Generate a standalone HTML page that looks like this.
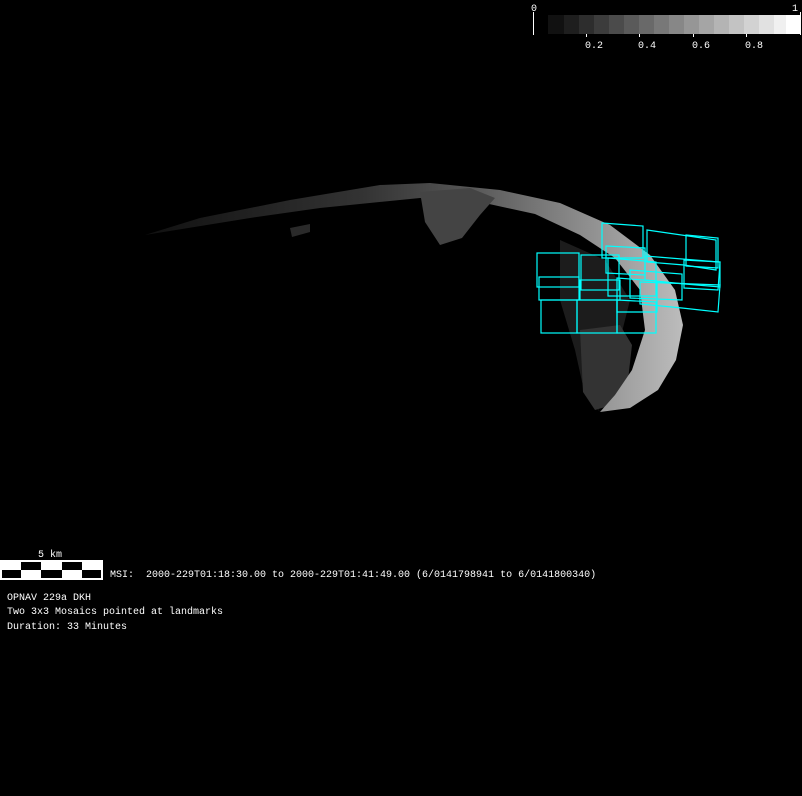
<!DOCTYPE html>
<html><head><style>
html,body{margin:0;padding:0;background:#000;width:802px;height:796px;overflow:hidden}
svg{position:absolute;left:0;top:0}
text{font-family:"Liberation Mono",monospace;font-size:10px;fill:#fff}
</style></head><body>
<svg width="802" height="796" viewBox="0 0 802 796">
<defs>
<linearGradient id="lg" x1="150" y1="0" x2="680" y2="0" gradientUnits="userSpaceOnUse">
<stop offset="0" stop-color="#111"/><stop offset="0.4" stop-color="#333"/><stop offset="0.6" stop-color="#555"/><stop offset="0.8" stop-color="#888"/><stop offset="1" stop-color="#bbb"/>
</linearGradient>
</defs>
<g>
<rect x="548" y="15" width="16" height="19" fill="#111"/>
<rect x="564" y="15" width="15" height="19" fill="#1e1e1e"/>
<rect x="579" y="15" width="15" height="19" fill="#2d2d2d"/>
<rect x="594" y="15" width="15" height="19" fill="#3c3c3c"/>
<rect x="609" y="15" width="15" height="19" fill="#4b4b4b"/>
<rect x="624" y="15" width="15" height="19" fill="#5a5a5a"/>
<rect x="639" y="15" width="15" height="19" fill="#696969"/>
<rect x="654" y="15" width="15" height="19" fill="#787878"/>
<rect x="669" y="15" width="15" height="19" fill="#878787"/>
<rect x="684" y="15" width="15" height="19" fill="#969696"/>
<rect x="699" y="15" width="15" height="19" fill="#a5a5a5"/>
<rect x="714" y="15" width="15" height="19" fill="#b4b4b4"/>
<rect x="729" y="15" width="15" height="19" fill="#c3c3c3"/>
<rect x="744" y="15" width="15" height="19" fill="#d2d2d2"/>
<rect x="759" y="15" width="15" height="19" fill="#e1e1e1"/>
<rect x="774" y="15" width="12" height="19" fill="#f0f0f0"/>
<rect x="786" y="15" width="14" height="19" fill="#fff"/>
<line x1="533.5" y1="12" x2="533.5" y2="35" stroke="#fff"/>
<line x1="800.5" y1="12" x2="800.5" y2="35" stroke="#fff"/>
<g stroke="#fff"><line x1="586.5" y1="34" x2="586.5" y2="37"/><line x1="639.5" y1="34" x2="639.5" y2="37"/><line x1="693.5" y1="34" x2="693.5" y2="37"/><line x1="746.5" y1="34" x2="746.5" y2="37"/></g>
<text x="531" y="11">0</text><text x="792" y="11">1</text>
<text x="585" y="48">0.2</text><text x="638" y="48">0.4</text><text x="692" y="48">0.6</text><text x="745" y="48">0.8</text>
</g>
<path d="M560,240 L605,260 L630,300 L620,340 L600,370 L590,395 L600,412 L585,395 L575,350 L560,300 Z" fill="#1c1c1c"/>
<path d="M580,330 L620,325 L632,345 L628,380 L612,405 L595,410 L583,392 Z" fill="#333"/>
<path d="M145,235 L200,218 L290,200 L380,185 L430,183 L500,190 L560,203 L610,225 L650,255 L675,290 L683,325 L676,360 L658,390 L630,408 L600,412 L615,395 L632,370 L645,330 L640,290 L615,258 L580,235 L535,214 L480,202 L420,198 L320,208 L250,218 Z" fill="url(#lg)"/>
<path d="M420,192 L470,188 L495,198 L480,215 L462,238 L440,245 L425,222 Z" fill="#444"/>
<path d="M290,228 L310,224 L310,232 L292,237 Z" fill="#2a2a2a"/>
<g fill="none" stroke="#0ff" stroke-width="1.2">
<rect x="537" y="253" width="42" height="34"/>
<rect x="539" y="277" width="40" height="23"/>
<rect x="541" y="300" width="36" height="33"/>
<rect x="581" y="255" width="38" height="35"/>
<rect x="580" y="280" width="40" height="20"/>
<rect x="577" y="300" width="40" height="33"/>
<polygon points="602,223 643,226 643,258 602,258"/>
<polygon points="606,246 645,248 645,275 606,273"/>
<polygon points="608,258 656,262 656,296 608,296"/>
<polygon points="617,278 657,281 657,312 617,312"/>
<polygon points="617,300 656,302 656,333 617,333"/>
<polygon points="647,230 716,240 716,270 684,265 647,262"/>
<polygon points="686,235 718,238 718,268 686,266"/>
<polygon points="645,256 720,262 720,287 685,284 645,280"/>
<polygon points="684,260 720,262 718,290 684,288"/>
<polygon points="640,282 720,285 718,312 682,308 640,304"/>
<polygon points="630,270 682,274 682,300 630,298"/>
</g>
<rect x="0" y="560" width="103" height="20" fill="#fff"/>
<g fill="#000">
<rect x="21" y="562" width="20" height="8"/><rect x="62" y="562" width="20" height="8"/>
<rect x="2" y="570" width="19" height="8"/><rect x="41" y="570" width="21" height="8"/><rect x="82" y="570" width="19" height="8"/>
</g>
<text x="38" y="557">5 km</text>
<text x="110" y="577" xml:space="preserve">MSI:  2000-229T01:18:30.00 to 2000-229T01:41:49.00 (6/0141798941 to 6/0141800340)</text>
<text x="7" y="600">OPNAV 229a DKH</text>
<text x="7" y="614">Two 3x3 Mosaics pointed at landmarks</text>
<text x="7" y="629">Duration: 33 Minutes</text>
</svg>
</body></html>
